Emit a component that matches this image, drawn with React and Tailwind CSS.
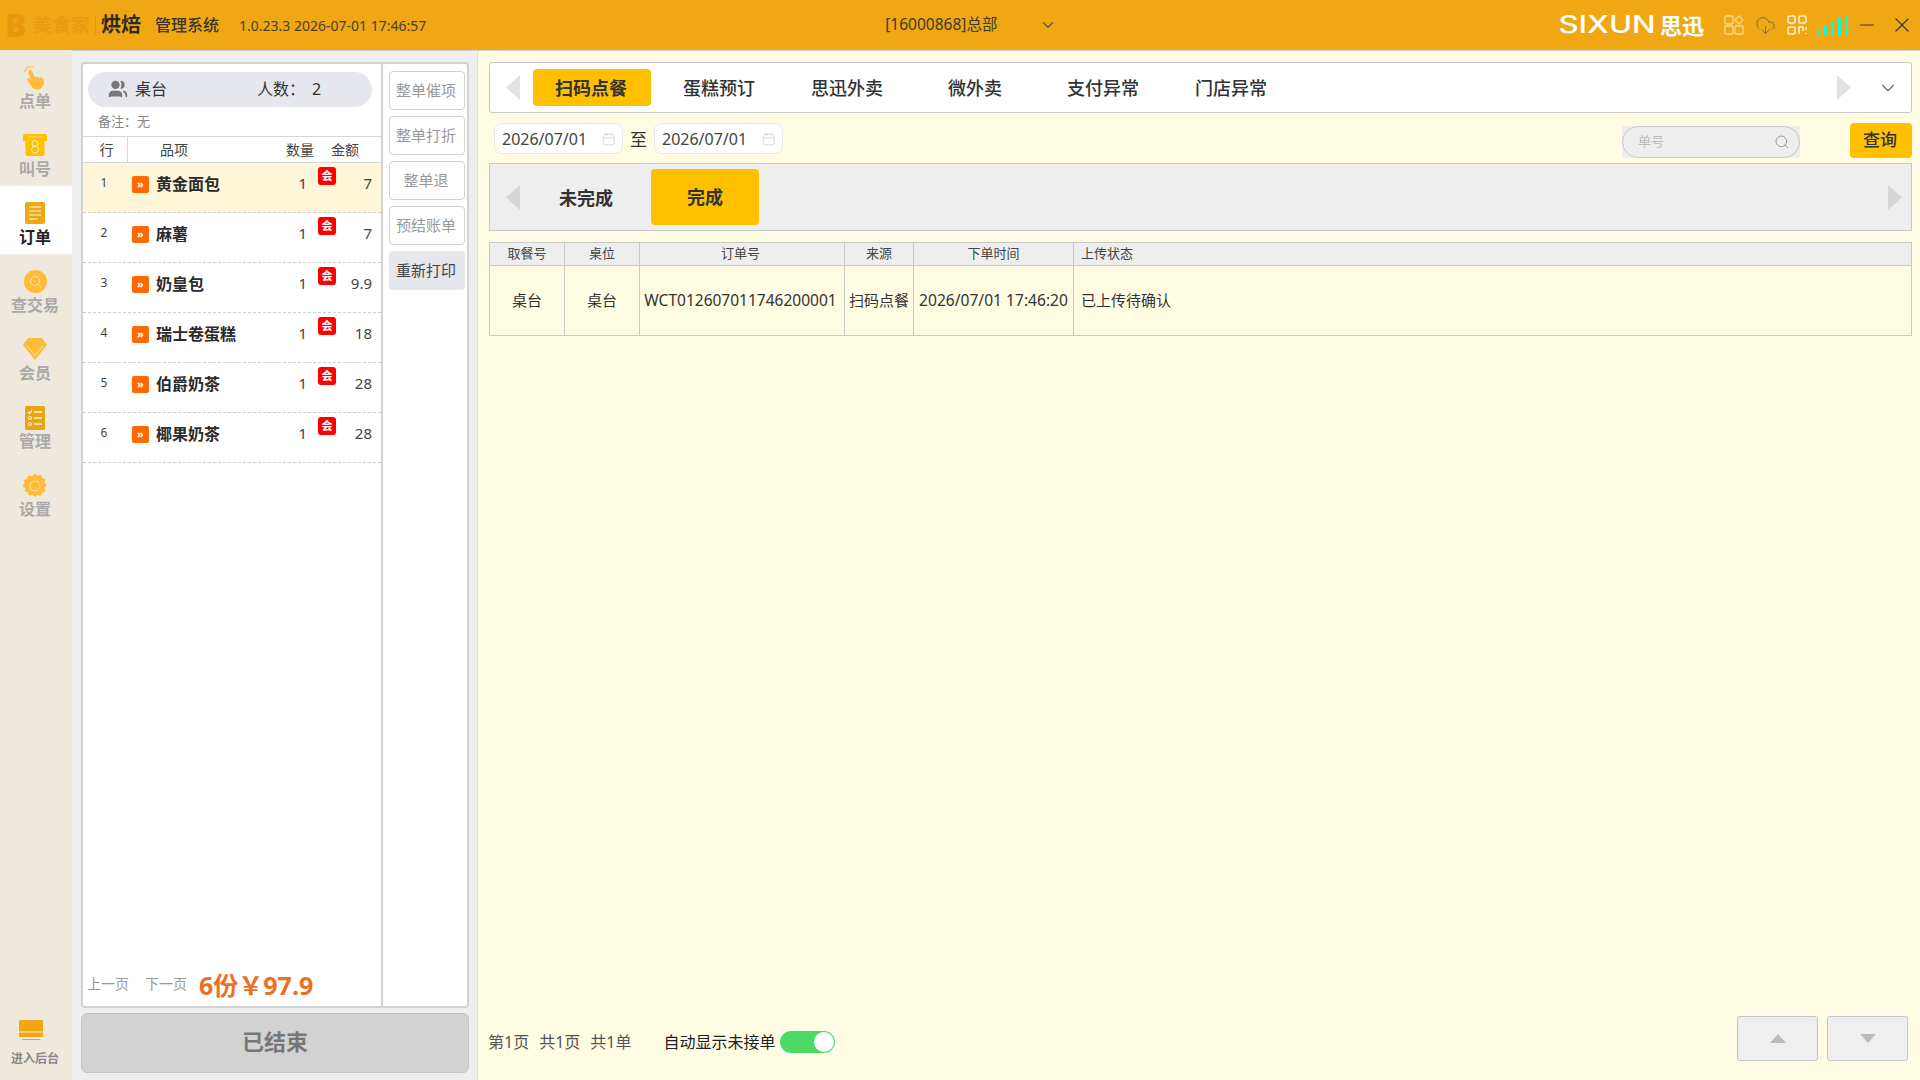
import React from "react";
import { Users, Search, Calendar, ChevronDown, CloudDownload, Minus, X } from "lucide-react";

const font = "font-['Noto_Sans','Noto_Sans_CJK_SC',sans-serif]";

const items = [
  { name: "黄金面包", amount: "7" },
  { name: "麻薯", amount: "7" },
  { name: "奶皇包", amount: "9.9" },
  { name: "瑞士卷蛋糕", amount: "18" },
  { name: "伯爵奶茶", amount: "28" },
  { name: "椰果奶茶", amount: "28" },
];

const tabs = ["扫码点餐", "蛋糕预订", "思迅外卖", "微外卖", "支付异常", "门店异常"];
const sideButtons = ["整单催项", "整单打折", "整单退", "预结账单", "重新打印"];

const cols = [
  { title: "取餐号", value: "桌台", w: "w-[75px]", cell: "justify-center text-[15px]" },
  { title: "桌位", value: "桌台", w: "w-[75px]", cell: "justify-center text-[15px]" },
  { title: "订单号", value: "WCT012607011746200001", w: "w-[205px]", cell: "justify-center pr-[3px] text-[15.5px]" },
  { title: "来源", value: "扫码点餐", w: "w-[69px]", cell: "justify-center text-[15px]" },
  { title: "下单时间", value: "2026/07/01 17:46:20", w: "w-[160px]", cell: "justify-center text-[15.6px]" },
  { title: "上传状态", value: "已上传待确认", w: "flex-1", cell: "justify-start pl-[7px] text-[15px]" },
];

function HandIcon() {
  return (
    <svg width="26" height="25" viewBox="0 0 26 25">
      <path d="M3 6a6 6 0 0 1 9-5" fill="none" stroke="#FFC65C" strokeWidth="1.4" />
      <path d="M7 4.500c1.200-1 2.800-.4 3.200 1l2 5.500 1-.6 1.200 1 1.300-.7 1.300 1 1.400-.5c2.300.2 3.600 2 3.600 4.300 0 4.500-3 8-7 8-2.500 0-4.500-1.200-6-3.400L5.500 14c-.8-1.300.9-2.600 2-1.600l1.800 1.600-3-7c-.3-.9.1-1.800.7-2.500z" fill="#FFBC3B" />
    </svg>
  );
}

function TicketIcon() {
  return (
    <svg width="24" height="22" viewBox="0 0 24 22">
      <path d="M0 2a2 2 0 0 1 2-2h20a2 2 0 0 1 2 2v5h-2.500v13a2 2 0 0 1-2 2H4.500a2 2 0 0 1-2-2V7H0z" fill="#FFC000" />
      <path d="M5 3h14" stroke="#FFE08A" strokeWidth="1" />
      <circle cx="12" cy="9.500" r="3" fill="none" stroke="#FFEFC0" strokeWidth="1" />
      <circle cx="12" cy="15.500" r="3.500" fill="none" stroke="#FFEFC0" strokeWidth="1" />
    </svg>
  );
}

function OrderIcon() {
  return (
    <svg width="20" height="22" viewBox="0 0 20 22">
      <rect width="20" height="22" rx="2" fill="#EFA714" />
      <path d="M4 5h12M4 9h12M4 13h12M4 17h9" stroke="#FBDFA0" strokeWidth="1.500" />
    </svg>
  );
}

function SearchCircleIcon() {
  return (
    <svg width="23" height="23" viewBox="0 0 23 23">
      <circle cx="11.500" cy="11.500" r="11.500" fill="#FFBC3B" />
      <circle cx="11" cy="11" r="4.500" fill="none" stroke="#FFE9BC" strokeWidth="1" />
      <path d="M14.500 14.500l2.500 2.500" stroke="#FFE9BC" strokeWidth="1" />
    </svg>
  );
}

function DiamondIcon() {
  return (
    <svg width="24" height="22" viewBox="0 0 24 22">
      <path d="M5 0h14l5 7-12 15L0 7z" fill="#FFBC3B" />
      <path d="M4 8l8 9 8-9" fill="none" stroke="#FFE2A6" strokeWidth="1" />
    </svg>
  );
}

function ManageIcon() {
  return (
    <svg width="20" height="24" viewBox="0 0 20 24">
      <rect width="20" height="24" rx="1.500" fill="#E8A513" />
      <path d="M3 6l1.500 1.500L7 4.500M9 6h8M9 12h8M9 18h8" fill="none" stroke="#FFF0CC" strokeWidth="1.300" />
      <circle cx="5" cy="12" r="1.500" fill="none" stroke="#FFF0CC" />
      <circle cx="5" cy="18" r="1.500" fill="none" stroke="#FFF0CC" />
    </svg>
  );
}

function GearIcon() {
  return (
    <svg width="24" height="24" viewBox="0 0 24 24">
      <path d="M12 0l2.500 2 3.200-.8 1.300 3 3 1.300-.8 3.200 2 2.500-2 2.500.8 3.200-3 1.300-1.300 3-3.200-.8-2.500 2-2.500-2-3.200.8-1.300-3-3-1.300.8-3.200L0 12l2-2.500-.8-3.200 3-1.300 1.300-3 3.200.8z" fill="#FFBC3B" stroke="#FFBC3B" strokeWidth="1" strokeLinejoin="round" />
      <circle cx="12" cy="12" r="5" fill="none" stroke="#FFE2A6" strokeWidth="1" />
    </svg>
  );
}

function MonitorIcon() {
  return (
    <svg width="24" height="20" viewBox="0 0 24 20">
      <path d="M1.500 0h21A1.500 1.500 0 0 1 24 1.500V17H0V1.500A1.500 1.500 0 0 1 1.500 0z" fill="#EFA714" />
      <path d="M0 12h24" stroke="#FFE9BC" strokeWidth="1" />
      <path d="M3 19.500h18" stroke="#EFA714" strokeWidth="1" />
    </svg>
  );
}

function AppsIcon() {
  return (
    <svg width="20" height="20" viewBox="0 0 20 20" fill="none" stroke="#FAD98F" strokeWidth="1.300">
      <rect x="1" y="1" width="8" height="8" rx="1" />
      <rect x="1" y="11" width="8" height="8" rx="1" />
      <rect x="11" y="11" width="8" height="8" rx="1" />
      <rect x="12.200" y="2.200" width="5.600" height="5.600" transform="rotate(45 15 5)" />
    </svg>
  );
}

function QrIcon() {
  return (
    <svg width="20" height="20" viewBox="0 0 20 20" fill="none" stroke="#FFF3D6" strokeWidth="1.500">
      <rect x="1" y="1" width="7" height="7" rx="1.500" />
      <rect x="12" y="1" width="7" height="7" rx="1.500" />
      <rect x="1" y="12" width="7" height="7" rx="1.500" />
      <path d="M12 19v-7h4v4M19 12v3M19 18v1" />
      <path d="M4.500 4.500h.1M15.500 4.500h.1M4.500 15.500h.1" />
    </svg>
  );
}

function SignalIcon() {
  return (
    <div className="flex items-end gap-[4px] h-[20px]">
      <div className="w-[3px] h-[6px] bg-[#19F5D8]" />
      <div className="w-[3px] h-[10px] bg-[#19F5D8]" />
      <div className="w-[3px] h-[13px] bg-[#19F5D8]" />
      <div className="w-[3px] h-[17px] bg-[#19F5D8]" />
      <div className="w-[3px] h-[20px] bg-[#19F5D8]" />
    </div>
  );
}

function TriangleLeft({ className }) {
  return (
    <svg width="14" height="25" viewBox="0 0 14 25" className={className}>
      <path d="M14 0v25L0 12.500z" fill="currentColor" />
    </svg>
  );
}

function TriangleRight({ className }) {
  return (
    <svg width="14" height="25" viewBox="0 0 14 25" className={className}>
      <path d="M0 0v25l14-12.500z" fill="currentColor" />
    </svg>
  );
}

function NavItem({ icon, label, active }) {
  return (
    <div className={`h-[68px] flex flex-col items-center pt-[16px] pr-[2px] ${active ? "bg-white" : ""}`}>
      <div className="h-[25px] flex items-start justify-center">{icon}</div>
      <div className={`text-[16px] leading-[20px] font-bold ${active ? "text-[#222]" : "text-[#aaa]"}`}>{label}</div>
    </div>
  );
}

function DateBox() {
  return (
    <div className="w-[129px] h-[31px] bg-white rounded-[8px] border border-[#e8e8e8] flex items-center justify-between pl-[7px] pr-[6px]">
      <span className="text-[16px] text-[#444]">2026/07/01</span>
      <Calendar size={14} strokeWidth={1.2} className="text-[#ccc]" />
    </div>
  );
}

export default function App() {
  return (
    <div className={`${font} w-[1920px] h-[1080px] flex flex-col overflow-hidden bg-[#FFFCE3]`}>
      {/* top bar */}
      <div className="h-[51px] shrink-0 bg-[#EFA714] border-b border-[#d0d0d0] flex items-center">
        <span className="ml-[5px] w-[20px] text-[32px] leading-none font-black text-[#E8980C]">B</span>
        <span className="ml-[8px] text-[19px] text-[#E89C12] font-bold">美食家</span>
        <div className="ml-[5px] w-px h-[19px] bg-[#DC9A12]" />
        <span className="ml-[5px] text-[20px] text-[#2e2a20] font-bold">烘焙</span>
        <span className="ml-[14px] text-[16px] text-[#3a3528] font-medium">管理系统</span>
        <span className="ml-[20px] text-[14px] text-[#4a4030]">1.0.23.3 2026-07-01 17:46:57</span>
        <span className="ml-[459px] text-[15.5px] text-[#3f3a2c]">[16000868]总部</span>
        <ChevronDown size={18} strokeWidth={1.6} className="ml-[42px] text-[#555]" />
        <div className="ml-auto flex items-center">
          <span className="w-[92px] text-center text-[24px] leading-none font-['Inter',sans-serif] font-medium text-white scale-x-[1.3]">SIXUN</span>
          <span className="ml-[7px] text-[22px] leading-none font-bold text-white">思迅</span>
          <div className="ml-[20px]"><AppsIcon /></div>
          <CloudDownload size={21} strokeWidth={1.1} className="ml-[11px] text-[#776a50]" />
          <div className="ml-[11px]"><QrIcon /></div>
          <div className="ml-[10px]"><SignalIcon /></div>
          <Minus size={22} strokeWidth={1.3} className="ml-[8px] text-[#3f3a2c]" />
          <X size={24} strokeWidth={1.3} className="ml-[12px] mr-[6px] text-[#3f3a2c]" />
        </div>
      </div>

      <div className="flex-1 flex min-h-0">
        {/* side nav */}
        <div className="w-[72px] shrink-0 -mt-px bg-[#EFE9DD] flex flex-col">
          <NavItem icon={<HandIcon />} label="点单" />
          <NavItem icon={<TicketIcon />} label="叫号" />
          <NavItem icon={<OrderIcon />} label="订单" active />
          <NavItem icon={<SearchCircleIcon />} label="查交易" />
          <NavItem icon={<DiamondIcon />} label="会员" />
          <NavItem icon={<ManageIcon />} label="管理" />
          <NavItem icon={<GearIcon />} label="设置" />
          <div className="mt-auto pb-[12px] flex flex-col items-center">
            <div className="mr-[10px]"><MonitorIcon /></div>
            <div className="mt-[10px] mr-[2px] text-[12px] leading-[18px] font-bold text-[#888]">进入后台</div>
          </div>
        </div>

        {/* order panel */}
        <div className="w-[406px] shrink-0 bg-[#EEEEEE] pl-[9px] pr-[8px] pt-[11px] pb-[7px] flex flex-col border-r border-[#dcdcdc]">
          <div className="h-[946px] bg-white border-2 border-[#d2d2d2] rounded-[4px] flex">
            <div className="w-[298px] flex flex-col">
              <div className="mt-[8px] ml-[5px] w-[284px] h-[35px] pb-[2px] bg-[#E6E7EC] rounded-full flex items-center text-[16px] text-[#333]">
                <Users size={20} fill="#777" stroke="#777" className="ml-[20px]" />
                <span className="ml-[7px]">桌台</span>
                <span className="ml-[90px]">人数：</span>
                <span className="ml-[7px]">2</span>
              </div>
              <div className="h-[29px] pl-[15px] flex items-center text-[13px] text-[#888]">备注：无</div>
              <div className="h-[27px] border-y border-[#d6d6d6] flex items-center text-[14px] text-[#444]">
                <div className="w-[45px] h-full pl-[3px] text-center leading-[25px] border-r border-[#d6d6d6]">行</div>
                <div className="w-[149px] pl-[32px]">品项</div>
                <div className="w-[46px] text-center">数量</div>
                <div className="w-[44px] text-center">金额</div>
              </div>
              {items.map((item, i) => (
                <div
                  key={item.name}
                  className={`h-[50px] shrink-0 border-b border-dashed border-[#cfcfcf] flex items-start ${i === 0 ? "bg-[#FFF5D8]" : ""}`}
                >
                  <div className="w-[42px] pt-[11px] text-center text-[12px] leading-[18px] text-[#444]">{i + 1}</div>
                  <div className="mt-[13px] ml-[7px] w-[17px] h-[17px] rounded-[2px] bg-[#FF6A00] text-white text-[11px] leading-[15px] text-center font-bold">»</div>
                  <div className="ml-[7px] w-[135px] pt-[9px] text-[16px] leading-[24px] font-bold text-[#2b2b2b]">{item.name}</div>
                  <div className="w-[16px] pt-[8px] text-right text-[15px] leading-[24px] text-[#444]">1</div>
                  <div className="mt-[4px] ml-[11px] w-[18px] h-[18px] rounded-[3px] bg-[#FF0000] text-white text-[11px] leading-[17px] text-center font-bold">会</div>
                  <div className="ml-[2px] w-[34px] pt-[8px] text-right text-[15px] leading-[24px] text-[#444]">{item.amount}</div>
                </div>
              ))}
              <div className="mt-auto mb-[7px] pl-[4px] flex items-start">
                <span className="mt-[1px] text-[14px] leading-[24px] text-[#999]">上一页</span>
                <span className="mt-[1px] ml-[16px] text-[14px] leading-[24px] text-[#999]">下一页</span>
                <span className="ml-[12px] text-[25px] leading-[28px] font-bold text-[#EE6E25]">6份￥97.9</span>
              </div>
            </div>
            <div className="flex-1 border-l-2 border-[#d2d2d2] pl-[6px] pr-[2px] pt-[7px] flex flex-col gap-[6px]">
              {sideButtons.map((label, i) => (
                <div
                  key={label}
                  className={`h-[39px] pr-[2px] rounded-[4px] flex items-center justify-center text-[15px] ${
                    i === 4 ? "bg-[#E6E7EC] text-[#444]" : "border border-[#d2d2d2] text-[#999]"
                  }`}
                >
                  {label}
                </div>
              ))}
            </div>
          </div>
          <div className="mt-[5px] flex-1 pb-[3px] bg-[#D2D2D2] border border-[#c4c4c4] rounded-[6px] flex items-center justify-center text-[22px] font-bold text-[#777]">
            已结束
          </div>
        </div>

        {/* orders */}
        <div className="flex-1 min-w-0 pl-[11px] pr-[8px] pt-[11px] pb-[19px] flex flex-col">
          <div className="h-[51px] bg-white border border-[#c8c8c8] rounded-[3px] flex items-center">
            <TriangleLeft className="ml-[16px] text-[#e2e2e2]" />
            <div className="ml-[13px] flex gap-[10px]">
              {tabs.map((tab, i) => (
                <div
                  key={tab}
                  className={`w-[118px] h-[37px] pt-[2px] pr-[2px] rounded-[4px] flex items-center justify-center text-[18px] text-[#333] ${
                    i === 0 ? "bg-[#FFC000] font-bold" : "font-medium"
                  }`}
                >
                  {tab}
                </div>
              ))}
            </div>
            <TriangleRight className="ml-auto text-[#e2e2e2]" />
            <ChevronDown size={22} strokeWidth={1.2} className="ml-[26px] mr-[12px] text-[#666]" />
          </div>

          <div className="h-[50px] pt-[10px] flex items-start">
            <div className="ml-[5px]"><DateBox /></div>
            <span className="w-[31px] text-center text-[17px] leading-[34px] text-[#333]">至</span>
            <DateBox />
            <div className="ml-auto mt-[3px] w-[178px] h-[32px] bg-[#EEEEEE]">
              <div className="h-full rounded-full border border-[#c8c8c8] flex items-center justify-between pl-[15px] pr-[9px]">
                <span className="text-[13px] text-[#bbb]">单号</span>
                <Search size={16} strokeWidth={1.2} className="text-[#888]" />
              </div>
            </div>
            <div className="ml-[50px] w-[62px] h-[35px] pb-[2px] pr-[2px] rounded-[4px] bg-[#FFC000] flex items-center justify-center text-[17px] font-medium text-[#333]">
              查询
            </div>
          </div>

          <div className="h-[68px] bg-[#EEEEEE] border border-[#c8c8c8] flex items-center">
            <TriangleLeft className="ml-[16px] text-[#d6d6d6]" />
            <div className="ml-[12px] w-[108px] pt-[2px] text-center text-[18px] font-bold text-[#333]">未完成</div>
            <div className="ml-[11px] w-[108px] h-[56px] rounded-[4px] bg-[#FFC000] flex items-center justify-center text-[18px] font-bold text-[#333]">完成</div>
            <TriangleRight className="ml-auto mr-[9px] text-[#d6d6d6]" />
          </div>

          <div className="mt-[11px] border border-[#c8c8c8]">
            <div className="h-[23px] bg-[#EEEEEE] border-b border-[#c8c8c8] flex">
              {cols.map((col, i) => (
                <div
                  key={col.title}
                  className={`${col.w} ${col.cell} !text-[13px] flex items-center text-[#444] ${i < 5 ? "border-r border-[#c8c8c8]" : ""}`}
                >
                  {col.title}
                </div>
              ))}
            </div>
            <div className="h-[69px] flex">
              {cols.map((col, i) => (
                <div
                  key={col.title}
                  className={`${col.w} ${col.cell} flex items-center whitespace-nowrap text-[#333] ${i < 5 ? "border-r border-[#c8c8c8]" : ""}`}
                >
                  {col.value}
                </div>
              ))}
            </div>
          </div>

          <div className="mt-auto flex items-start">
            <div className="h-[45px] pt-[6px] flex items-center text-[16px] text-[#555]">
              <span className="-ml-px">第1页</span>
              <span className="ml-[10px]">共1页</span>
              <span className="ml-[10px]">共1单</span>
              <span className="ml-[32px] text-[#222]">自动显示未接单</span>
              <div className="ml-[5px] bg-white">
                <div className="w-[55px] h-[22px] rounded-full bg-[#4CD964] flex items-center justify-end pr-px">
                  <div className="w-[20px] h-[20px] rounded-full bg-white" />
                </div>
              </div>
            </div>
            <div className="ml-auto w-[81px] h-[45px] bg-[#EFEFEF] border border-[#c4c4c4] rounded-[3px] flex items-center justify-center">
              <div className="w-0 h-0 border-x-8 border-x-transparent border-b-[9px] border-b-[#bbb]" />
            </div>
            <div className="ml-[9px] mr-[4px] w-[81px] h-[45px] bg-[#EFEFEF] border border-[#c4c4c4] rounded-[3px] flex items-center justify-center">
              <div className="w-0 h-0 border-x-8 border-x-transparent border-t-[9px] border-t-[#bbb]" />
            </div>
          </div>
        </div>
      </div>
    </div>
  );
}
